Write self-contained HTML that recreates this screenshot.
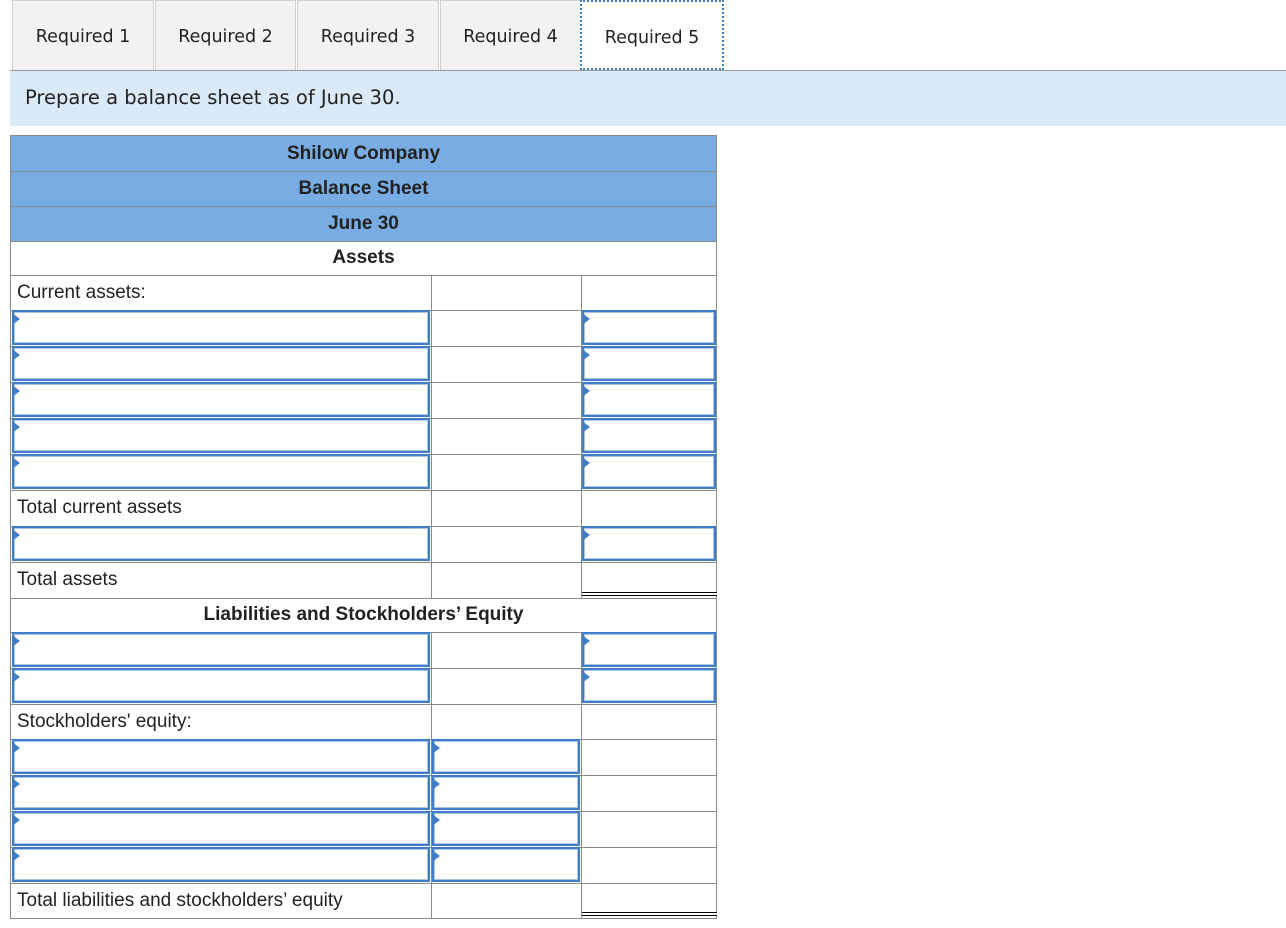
<!DOCTYPE html>
<html><head><style>
body{margin:0;width:1286px;height:928px;background:#fff;position:relative;overflow:hidden;font-family:"Liberation Sans",Arial,sans-serif;}
.a{position:absolute;box-sizing:border-box;}
.tab{position:absolute;top:0;height:70px;background:#f2f2f2;border:1px solid #cfcfcf;border-bottom:none;font-family:"DejaVu Sans",Verdana,sans-serif;font-size:17.5px;color:#222;text-align:center;line-height:72px;box-sizing:border-box;}
.hl{position:absolute;left:10px;width:707px;height:1px;background:#8a8a8a;}
.vl{position:absolute;width:1px;background:#8a8a8a;}
.inp{position:absolute;box-sizing:border-box;border:2px solid #3f7dc6;box-shadow:inset 0 0 0 1px #a8c5ea;background:#fff;}
.inp::before{content:"";position:absolute;left:-2px;top:1px;border-left:8px solid #3f7dc6;border-top:6px solid transparent;border-bottom:6px solid transparent;}
.t{position:absolute;font-size:19px;color:#222;}
.b{position:absolute;left:10px;width:707px;text-align:center;font-weight:bold;font-size:19px;color:#222;}
</style></head><body>
<div class="tab" style="left:12px;width:142px">Required 1</div>
<div class="tab" style="left:155px;width:141px">Required 2</div>
<div class="tab" style="left:297px;width:142px">Required 3</div>
<div class="tab" style="left:440px;width:141px">Required 4</div>
<div class="tab" style="left:580px;width:144px;background:#fff;border:2px dotted #3f7dc6;">Required 5</div>
<div class="a" style="left:10px;top:70px;width:1276px;height:1px;background:#999"></div>
<div class="a" style="left:10px;top:71px;width:1276px;height:55px;background:#dbeaf8"></div>
<div class="a" style="left:25px;top:86px;font-family:'DejaVu Sans',Verdana,sans-serif;font-size:19.5px;color:#222">Prepare a balance sheet as of June 30.</div>

<div class="a" style="left:10px;top:135px;width:707px;height:784px;border:1px solid #8a8a8a"></div>
<div class="a" style="left:11px;top:136px;width:705px;height:105px;background:#78ace2"></div>
<div class="hl" style="top:171px"></div><div class="hl" style="top:206px"></div><div class="hl" style="top:241px"></div>
<div class="b" style="top:143px">Shilow Company</div>
<div class="b" style="top:178px">Balance Sheet</div>
<div class="b" style="top:213px">June 30</div>
<div class="b" style="top:247px">Assets</div>
<div class="hl" style="top:275px"></div>
<div class="hl" style="top:310px"></div><div class="hl" style="top:346px"></div><div class="hl" style="top:382px"></div><div class="hl" style="top:418px"></div><div class="hl" style="top:454px"></div><div class="hl" style="top:490px"></div><div class="hl" style="top:526px"></div><div class="hl" style="top:562px"></div><div class="hl" style="top:598px"></div><div class="hl" style="top:632px"></div><div class="hl" style="top:668px"></div><div class="hl" style="top:704px"></div><div class="hl" style="top:739px"></div><div class="hl" style="top:775px"></div><div class="hl" style="top:811px"></div><div class="hl" style="top:847px"></div><div class="hl" style="top:883px"></div>
<div class="vl" style="left:431px;top:275px;height:323px"></div>
<div class="vl" style="left:581px;top:275px;height:323px"></div>
<div class="vl" style="left:431px;top:632px;height:287px"></div>
<div class="vl" style="left:581px;top:632px;height:287px"></div>
<div class="a" style="left:582px;top:592px;width:135px;height:4px;border-top:1px solid #000;border-bottom:1px solid #000;background:#fff"></div>
<div class="a" style="left:582px;top:912px;width:135px;height:4px;border-top:1px solid #000;border-bottom:1px solid #000;background:#fff"></div>

<div class="t" style="left:17px;top:282px">Current assets:</div>
<div class="t" style="left:17px;top:497px">Total current assets</div>
<div class="t" style="left:17px;top:569px">Total assets</div>
<div class="b" style="top:604px">Liabilities and Stockholders’ Equity</div>
<div class="t" style="left:17px;top:711px">Stockholders' equity:</div>
<div class="t" style="left:17px;top:890px">Total liabilities and stockholders’ equity</div>

<div class="inp" style="left:12px;top:310px;width:418px;height:35px"></div><div class="inp" style="left:582px;top:310px;width:134px;height:35px"></div>
<div class="inp" style="left:12px;top:346px;width:418px;height:35px"></div><div class="inp" style="left:582px;top:346px;width:134px;height:35px"></div>
<div class="inp" style="left:12px;top:382px;width:418px;height:35px"></div><div class="inp" style="left:582px;top:382px;width:134px;height:35px"></div>
<div class="inp" style="left:12px;top:418px;width:418px;height:35px"></div><div class="inp" style="left:582px;top:418px;width:134px;height:35px"></div>
<div class="inp" style="left:12px;top:454px;width:418px;height:35px"></div><div class="inp" style="left:582px;top:454px;width:134px;height:35px"></div>
<div class="inp" style="left:12px;top:526px;width:418px;height:35px"></div><div class="inp" style="left:582px;top:526px;width:134px;height:35px"></div>
<div class="inp" style="left:12px;top:632px;width:418px;height:35px"></div><div class="inp" style="left:582px;top:632px;width:134px;height:35px"></div>
<div class="inp" style="left:12px;top:668px;width:418px;height:35px"></div><div class="inp" style="left:582px;top:668px;width:134px;height:35px"></div>
<div class="inp" style="left:12px;top:739px;width:418px;height:35px"></div><div class="inp" style="left:432px;top:739px;width:148px;height:35px"></div>
<div class="inp" style="left:12px;top:775px;width:418px;height:35px"></div><div class="inp" style="left:432px;top:775px;width:148px;height:35px"></div>
<div class="inp" style="left:12px;top:811px;width:418px;height:35px"></div><div class="inp" style="left:432px;top:811px;width:148px;height:35px"></div>
<div class="inp" style="left:12px;top:847px;width:418px;height:35px"></div><div class="inp" style="left:432px;top:847px;width:148px;height:35px"></div>
</body></html>
